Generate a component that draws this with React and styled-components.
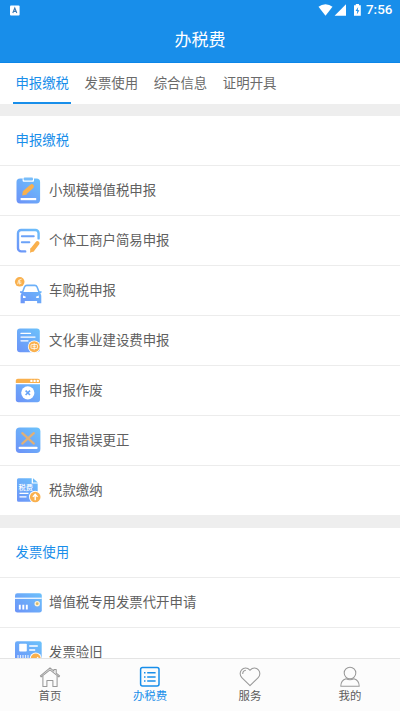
import React, { useState } from "react";
import styled, { createGlobalStyle } from "styled-components";

const GlobalStyle = createGlobalStyle`
  * {
    box-sizing: border-box;
  }
  body {
    margin: 0;
    background-color: #fff;
    color: #606060;
    font-family: "Roboto", "Noto Sans CJK SC", sans-serif;
  }
`;

const Screen = styled.div`
  height: 711px;
  display: flex;
  flex-direction: column;
  overflow: hidden;
`;

const Header = styled.header`
  flex: none;
  height: 63px;
  background-color: #188eea;
  border-bottom: 1px solid #0c86e8;
  color: #fff;
`;

const StatusBar = styled.div`
  height: 20px;
  display: flex;
  align-items: center;
  padding: 0 7px 0 10px;
`;

const StatusIcons = styled.div`
  margin-left: auto;
  display: flex;
  align-items: center;
`;

const Clock = styled.span`
  width: 27px;
  margin-left: 4px;
  font-size: 13.4px;
  font-weight: 500;
  line-height: 20px;
  white-space: nowrap;
`;

const Title = styled.h1`
  margin: 0;
  height: 41px;
  line-height: 41px;
  text-align: center;
  font-size: 17px;
  font-weight: 400;
`;

const Tabs = styled.nav`
  flex: none;
  height: 41px;
  display: flex;
  gap: 11.6px;
  padding-left: 13.4px;
`;

const Tab = styled.button`
  height: 41px;
  padding: 2px 2px 0;
  border: 0;
  border-bottom: 2px solid
    ${(props) => (props.$active ? "#188eea" : "transparent")};
  background: none;
  color: ${(props) => (props.$active ? "#188eea" : "#6a6a6a")};
  font: inherit;
  font-size: 13.4px;
  line-height: 38px;
  white-space: nowrap;
`;

const Content = styled.main`
  flex: 1;
  min-height: 0;
  overflow: hidden;
`;

const Section = styled.section`
  border-top: ${(props) => props.$gap}px solid #eee;
`;

const SectionTitle = styled.h2`
  margin: 0;
  height: 49px;
  padding-left: 15.5px;
  color: #188eea;
  font-size: 13.4px;
  font-weight: 400;
  line-height: 50px;
`;

const Row = styled.div`
  height: 50px;
  display: flex;
  align-items: center;
  gap: 5px;
  padding-left: 13px;
  border-top: 1px solid #ececec;
  font-size: 13.4px;
  line-height: 20px;

  svg {
    flex: none;
  }
  span {
    padding-top: 1px;
  }
`;

const BottomBar = styled.nav`
  flex: none;
  height: 53px;
  display: flex;
  background-color: #fcfcfc;
  border-top: 1px solid #e4e4e4;
`;

const BottomItem = styled.button`
  flex: 1;
  display: flex;
  flex-direction: column;
  align-items: center;
  padding: 7px 0 0;
  border: 0;
  background: none;
  color: ${(props) => (props.$active ? "#188eea" : "#5c5c5c")};
  font: inherit;
  font-size: 11.4px;
  line-height: 16px;

  svg {
    color: ${(props) => (props.$active ? "#188eea" : "#999")};
  }
`;

const BLUE = "url(#blue)";
const ORANGE = "#f9b04d";

function Gradients() {
  return (
    <svg width="0" height="0" style={{ display: "block" }}>
      <defs>
        <linearGradient
          id="blue"
          gradientUnits="userSpaceOnUse"
          x1="26"
          y1="3"
          x2="6"
          y2="28"
        >
          <stop offset="0" stopColor="#6cc2fb" />
          <stop offset="1" stopColor="#6c94f8" />
        </linearGradient>
      </defs>
    </svg>
  );
}

function RowIcon({ children }) {
  return (
    <svg width="31" height="31" viewBox="0 0 31 31" fill="none">
      {children}
    </svg>
  );
}

const ClipboardIcon = () => (
  <RowIcon>
    <rect x="3.5" y="3.4" width="23.6" height="25" rx="3.6" fill={BLUE} />
    <rect x="9.6" y="2.8" width="11.4" height="3.9" rx="1" fill="#fff" />
    <rect x="10.6" y="2.4" width="9.4" height="3" rx="1" fill="#78bdfa" />
    <path d="m12.4 17 6.4-5.6" stroke={ORANGE} strokeWidth="4.4" strokeLinecap="round" />
    <path d="m9.2 20.6.8-5 4 3.8z" fill={ORANGE} />
    <path d="M7.6 24.1h15.6" stroke="#fff" strokeWidth="2.2" />
  </RowIcon>
);

const FormIcon = () => (
  <RowIcon>
    <path
      d="M25.6 13.4V8.2A3.2 3.2 0 0 0 22.4 5H8.2A3.2 3.2 0 0 0 5 8.2v15a3.2 3.2 0 0 0 3.2 3.2h4"
      stroke={BLUE}
      strokeWidth="2.4"
      strokeLinecap="round"
    />
    <path d="M8.8 11.2h12M8.8 17.2h7.6" stroke="#6ba2f8" strokeWidth="1.9" strokeLinecap="round" />
    <path d="m19.6 24.4 4.8-6.2" stroke={ORANGE} strokeWidth="4.2" strokeLinecap="round" />
    <path d="m17 27.8.5-5 3.9 3.2z" fill={ORANGE} />
  </RowIcon>
);

const CarIcon = () => (
  <RowIcon>
    <path
      d="m9.2 18 2.3-6c.5-1.1 1.1-1.6 2.3-1.6h8c1.2 0 1.8.5 2.3 1.6l2.3 6"
      stroke="#6cb0f9"
      strokeWidth="1.6"
    />
    <path
      d="M7 16.2h2.2l.8.9h15.6l.8-.9h2.2v1.4l-1.3.9c.8.9 1 1.7 1 3v6.8h-4.2V26H11.8v2.3H7.6v-6.8c0-1.3.2-2.1 1-3L7 17.6z"
      fill={BLUE}
    />
    <path d="m10 20.6 2.9 1.2-.5 1.1H10zM25.8 20.6l-2.9 1.2.5 1.1h2.4z" fill="#fff" />
    <circle cx="6.7" cy="6.8" r="4.8" fill={ORANGE} />
    <path d="m4.7 9.2.9-4 3-1M5.2 7h3M6.7 5l-.4 4.1 2.2-1" stroke="#fff4dc" strokeWidth=".8" />
  </RowIcon>
);

const CultureIcon = () => (
  <RowIcon>
    <rect x="4" y="3.5" width="22.8" height="23.7" rx="3" fill={BLUE} />
    <path d="M8 8.4h9.5M8 12.1h14M8 15.8h7" stroke="#fff" strokeWidth="1.3" strokeLinecap="round" />
    <circle cx="21.2" cy="21.7" r="6.3" fill="#fff" />
    <circle cx="21.2" cy="21.7" r="5.5" fill={ORANGE} />
    <rect x="18" y="19.6" width="6.4" height="3.8" rx=".5" stroke="#fff" strokeWidth=".8" />
    <path d="M21.2 18v7.2M19.6 21.4h3.2" stroke="#fff" strokeWidth=".7" />
  </RowIcon>
);

const VoidIcon = () => (
  <RowIcon>
    <path d="M2.8 8V5.7a2 2 0 0 1 2-2H25a2 2 0 0 1 2 2V8z" fill={ORANGE} />
    <g fill="#fff">
      <circle cx="18.4" cy="5.9" r="1.2" />
      <circle cx="21.6" cy="5.9" r="1.2" />
      <circle cx="24.8" cy="5.9" r="1.2" />
    </g>
    <path d="M2.8 9.2H27v15.3a2.7 2.7 0 0 1-2.7 2.7H5.5a2.7 2.7 0 0 1-2.7-2.7z" fill={BLUE} />
    <circle cx="14.8" cy="17.8" r="6.6" fill="#fff" />
    <path d="m12.6 15.6 4.4 4.4m0-4.4L12.6 20" stroke="#66a4f8" strokeWidth="1.6" />
  </RowIcon>
);

const FixIcon = () => (
  <RowIcon>
    <rect x="2.8" y="2.6" width="24.6" height="25.3" rx="4" fill={BLUE} />
    <path d="M9.3 8.2 20.8 18.6m0-10.4L9.3 18.6" stroke="#dfb078" strokeWidth="2.3" strokeLinecap="round" />
    <path d="M6.7 22.9h16.8" stroke="#fff" strokeWidth="2.3" strokeLinecap="round" />
  </RowIcon>
);

const TaxIcon = () => (
  <RowIcon>
    <path d="M5.5 3.3h13.2v5.2h6v18.2H5.5A1.5 1.5 0 0 1 4 25.2V4.8a1.5 1.5 0 0 1 1.5-1.5z" fill={BLUE} />
    <path d="M20 3.3 24.8 7.5H20z" fill="#6cbcfa" />
    <text x="5.6" y="14.8" fill="#fff" fontSize="7.2" fontWeight="500">
      税费
    </text>
    <path d="M6.5 18.4h9M6.5 21.8h7" stroke="#fff" strokeWidth="1.3" />
    <circle cx="22.2" cy="22" r="6.2" fill="#fff" />
    <circle cx="22.2" cy="22" r="5.3" fill={ORANGE} />
    <path d="M22.2 25.2v-5.6m-2.3 2.3 2.3-2.5 2.3 2.5" stroke="#fff" strokeWidth="1.4" />
  </RowIcon>
);

const CardIcon = () => (
  <RowIcon>
    <rect x="2" y="6.2" width="26.8" height="19.4" rx="2.4" fill={BLUE} />
    <path d="M2 11.3h26.8" stroke="#eaf3ff" strokeWidth="1.4" />
    <path d="M6.8 17.8v4.6M10.3 17.8v4.6M13.8 17.8v4.6" stroke="#fff" strokeWidth="1.9" />
    <circle cx="24.2" cy="16.7" r="2.7" fill="#fff4d8" />
    <circle cx="24.2" cy="16.7" r="1.4" fill="#d9b96c" />
  </RowIcon>
);

const CheckIcon = () => (
  <RowIcon>
    <rect x="2" y="4.3" width="26.7" height="21" rx="2.2" fill={BLUE} />
    <rect x="6.2" y="6.8" width="7.6" height="7.8" rx=".8" fill="#fff" />
    <path d="M16.2 9h8.6M16.2 13h6" stroke="#fff" strokeWidth="1.3" />
    <path d="M5 18v4.6M7.5 18v4.6M10 18v4.6M12.5 18v4.6M15 18v4.6" stroke="#dcebff" strokeWidth="1.2" />
    <circle cx="22.7" cy="21.6" r="6" fill="#fff" />
    <circle cx="22.7" cy="21.6" r="5" fill={ORANGE} />
    <path d="m20.3 22 1.8 2 3-4" stroke="#fff" strokeWidth="1.2" />
  </RowIcon>
);

function NavIcon({ children }) {
  return (
    <svg
      width="22"
      height="22"
      viewBox="0 0 22 22"
      fill="none"
      stroke="currentColor"
      strokeWidth="1.05"
      strokeLinejoin="round"
    >
      {children}
    </svg>
  );
}

const HomeIcon = () => (
  <NavIcon>
    <path d="m1.4 9.9 9.6-8 3.9 3.3V3.4h2.3v3.7l3.4 2.8-.8 1L11 3.8l-8.8 7.1z" />
    <path d="M3.9 10v10.4h4v-5.9h6v5.9h4.2V10" />
  </NavIcon>
);

const ListIcon = () => (
  <NavIcon>
    <rect x="1.6" y="1.6" width="18.4" height="18.4" rx="2" strokeWidth="1.5" />
    <path d="M8.2 6.8h8.4M8.2 10.9h8.4M8.2 15h8.4M5 6.8h1.5M5 10.9h1.5M5 15h1.5" strokeWidth="1.5" />
  </NavIcon>
);

const HeartIcon = () => (
  <NavIcon>
    <path d="M11 19.7 2.8 11.6a5.6 5.6 0 0 1-.2-7.7 5.2 5.2 0 0 1 8-.1l.4.5.4-.5a5.2 5.2 0 0 1 8 .1 5.6 5.6 0 0 1-.2 7.7z" />
    <path d="M3.7 8c0-2 1.1-3.4 3.2-3.7" />
  </NavIcon>
);

const UserIcon = () => (
  <NavIcon>
    <circle cx="11" cy="7" r="5.8" />
    <path d="M1.8 20.3c0-4.2 1.8-6.7 5.3-7.6 2.4 1.3 5.3 1.3 7.8 0 3.5.9 5.3 3.4 5.3 7.6z" />
  </NavIcon>
);

function StatusRow() {
  return (
    <StatusBar>
      <svg width="10" height="11" viewBox="0 0 10 11">
        <rect x="0" y=".5" width="9.6" height="10" rx="1" fill="#fff" />
        <path d="m2.8 8 2-5 2 5M3.5 6.4h2.7" fill="none" stroke="#3b7ab4" strokeWidth="1.1" />
      </svg>
      <StatusIcons>
        <svg width="44" height="14" viewBox="0 0 44 14" fill="#fff">
          <path d="M.5 3.7a11 11 0 0 1 14 0L7.5 12.8z" />
          <path d="M28 1.3v11.4H16.6z" />
          <path d="M36 2.2h1.8V1h3.2v1.2h1.8v10.6H36z" />
          <path d="m40.2 4-2.6 4h1.7l-.5 3.5 2.6-4.3h-1.7z" fill="#188eea" />
        </svg>
        <Clock>7:56</Clock>
      </StatusIcons>
    </StatusBar>
  );
}

const tabs = ["申报缴税", "发票使用", "综合信息", "证明开具"];

const sections = [
  {
    title: "申报缴税",
    gap: 12,
    rows: [
      { label: "小规模增值税申报", Icon: ClipboardIcon },
      { label: "个体工商户简易申报", Icon: FormIcon },
      { label: "车购税申报", Icon: CarIcon },
      { label: "文化事业建设费申报", Icon: CultureIcon },
      { label: "申报作废", Icon: VoidIcon },
      { label: "申报错误更正", Icon: FixIcon },
      { label: "税款缴纳", Icon: TaxIcon },
    ],
  },
  {
    title: "发票使用",
    gap: 13,
    rows: [
      { label: "增值税专用发票代开申请", Icon: CardIcon },
      { label: "发票验旧", Icon: CheckIcon },
    ],
  },
];

const navItems = [
  { label: "首页", Icon: HomeIcon },
  { label: "办税费", Icon: ListIcon },
  { label: "服务", Icon: HeartIcon },
  { label: "我的", Icon: UserIcon },
];

function App() {
  const [tab, setTab] = useState(0);
  const [page, setPage] = useState(1);
  return (
    <Screen>
      <GlobalStyle />
      <Gradients />
      <Header>
        <StatusRow />
        <Title>办税费</Title>
      </Header>
      <Tabs>
        {tabs.map((label, i) => (
          <Tab key={label} $active={i === tab} onClick={() => setTab(i)}>
            {label}
          </Tab>
        ))}
      </Tabs>
      <Content>
        {sections.map(({ title, gap, rows }) => (
          <Section key={title} $gap={gap}>
            <SectionTitle>{title}</SectionTitle>
            {rows.map(({ label, Icon }) => (
              <Row key={label}>
                <Icon />
                <span>{label}</span>
              </Row>
            ))}
          </Section>
        ))}
      </Content>
      <BottomBar>
        {navItems.map(({ label, Icon }, i) => (
          <BottomItem key={label} $active={i === page} onClick={() => setPage(i)}>
            <Icon />
            {label}
          </BottomItem>
        ))}
      </BottomBar>
    </Screen>
  );
}

export default App;
